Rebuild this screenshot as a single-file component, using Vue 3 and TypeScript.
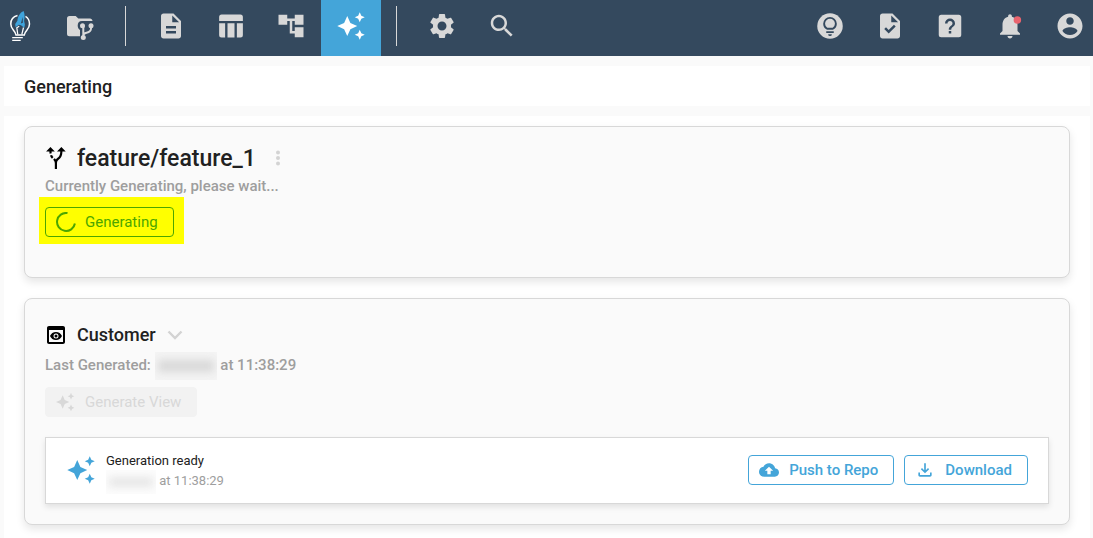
<script setup lang="ts">
interface NavItem {
  label: string
  path: string
  active?: boolean
}

const sparkle =
  'M19 9l1.25-2.75L23 5l-2.75-1.25L19 1l-1.25 2.75L15 5l2.75 1.25L19 9zm-7.5.5L9 4 6.5 9.5 1 12l5.5 2.5L9 20l2.5-5.5L17 12l-5.5-2.5zM19 15l-1.25 2.75L15 19l2.75 1.25L19 23l1.25-2.75L23 19l-2.75-1.25L19 15z'

const mainNav: NavItem[] = [
  {
    label: 'Documents',
    path: 'M14 2H6c-1.1 0-1.99.9-1.99 2L4 20c0 1.1.89 2 1.99 2H18c1.1 0 2-.9 2-2V8l-6-6zm2 16H8v-2h8v2zm0-4H8v-2h8v2zm-3-5V3.500L18.500 9H13z',
  },
  {
    label: 'Tables',
    path: 'M4.500 2.800h15a2 2 0 0 1 2 2V8h-19V4.800a2 2 0 0 1 2-2zM2.500 9.800h4.800v11.400H4.500a2 2 0 0 1-2-2zM9.200 9.800h5.600v11.400H9.200zM16.700 9.800h4.800v9.400a2 2 0 0 1-2 2h-2.800z',
  },
  { label: 'Structure', path: 'M22 11V3h-7v3H9V3H2v8h7V8h2v10h4v3h7v-8h-7v3h-2V8h2v3z' },
  { label: 'Generate', path: sparkle, active: true },
]

const toolNav: NavItem[] = [
  {
    label: 'Settings',
    path: 'M19.140 12.940c.04-.3.06-.61.06-.94 0-.32-.02-.64-.07-.94l2.030-1.580c.18-.14.23-.41.12-.61l-1.920-3.320c-.12-.22-.37-.29-.59-.22l-2.390.96c-.5-.38-1.030-.7-1.620-.94l-.36-2.540c-.04-.24-.24-.41-.48-.41h-3.840c-.24 0-.43.17-.47.41l-.36 2.540c-.59.24-1.130.57-1.620.94l-2.390-.96c-.22-.08-.47 0-.59.22L2.740 8.870c-.12.21-.08.47.12.61l2.030 1.580c-.05.3-.09.63-.09.94s.02.64.07.94l-2.030 1.580c-.18.14-.23.41-.12.61l1.920 3.320c.12.22.37.29.59.22l2.390-.96c.5.38 1.030.7 1.620.94l.36 2.540c.05.24.24.41.48.41h3.840c.24 0 .44-.17.47-.41l.36-2.540c.59-.24 1.130-.56 1.620-.94l2.390.96c.22.08.47 0 .59-.22l1.920-3.320c.12-.22.07-.47-.12-.61l-2.010-1.580zM12 15.600c-1.980 0-3.600-1.620-3.600-3.600s1.620-3.600 3.600-3.600 3.600 1.620 3.600 3.600-1.620 3.600-3.600 3.600z',
  },
  {
    label: 'Search',
    path: 'M15.500 14h-.79l-.28-.27C15.410 12.590 16 11.110 16 9.500 16 5.910 13.090 3 9.500 3S3 5.910 3 9.500 5.910 16 9.500 16c1.610 0 3.090-.59 4.230-1.570l.27.28v.79l5 4.990L20.490 19l-4.990-5zm-6 0C7.010 14 5 11.990 5 9.500S7.010 5 9.500 5 14 7.010 14 9.500 11.990 14 9.500 14z',
  },
]
</script>

<template>
  <div class="app">
    <header class="topbar">
      <nav class="left" aria-label="Main">
        <a class="logo" href="#" aria-label="Home">
          <svg viewBox="0 0 30 30" width="30" height="30" fill="none">
            <path d="M12.500 4.600C8.500 5.600 5.800 9 5.800 13c0 5.800 4.400 6.200 5.200 11h8.300c.8-4.800 5.200-5.200 5.200-11 0-3.600-1.500-6.200-4-7.700" stroke="#fff" stroke-width="1.500" />
            <path d="M12.800 23.500l-1-6.800 2.400-1.400M18.500 16.500l-1.700 7" stroke="#fff" stroke-width="1.200" />
            <path d="M7.200 26.600h10.600M7.200 29.300h8.500" stroke="#fff" stroke-width="1.300" />
            <path fill-rule="evenodd" d="M18.600 0c-3.600 1.600-5.900 5.600-6.200 9.700l-2.200 3.400.4 3.100 3.200-2.400 2.200.5 3.300 2.500.6-3.300-.8-3.500c.8-3.700.7-7-.5-10zM15.800 12.500l1.900-6.500.2 5.800z" fill="#3fa4dc" />
          </svg>
        </a>
        <button class="nav" type="button" aria-label="Repository">
          <svg viewBox="0 0 30 30" width="30" height="30">
            <path d="M4.500 5h6.200l2.600 2.500H25c1.300 0 2.400 1 2.500 2.500H17c-3 0-4.300 2-4.300 4.700 0 2 .9 3.300 2.300 4.200v6.300H4.500A2.500 2.500 0 0 1 2 22.700V7.500A2.500 2.500 0 0 1 4.500 5z" fill="currentColor" />
            <path d="M18.300 15v12M26 15v2.500c0 3-2 3.700-4.500 4.200-2 .4-3.200 1-3.200 3" fill="none" stroke="currentColor" stroke-width="2" />
            <circle cx="17.500" cy="14.800" r="2.500" fill="currentColor" />
            <circle cx="26" cy="14.800" r="2.500" fill="currentColor" />
            <circle cx="18.300" cy="26.500" r="2.500" fill="currentColor" />
          </svg>
        </button>
        <span class="divider"></span>
        <button v-for="item in mainNav" :key="item.label" class="nav" :class="{ active: item.active }" type="button" :aria-label="item.label">
          <svg viewBox="0 0 24 24" width="30" height="30"><path :d="item.path" fill="currentColor" /></svg>
        </button>
        <span class="divider"></span>
        <button v-for="item in toolNav" :key="item.label" class="nav" type="button" :aria-label="item.label">
          <svg viewBox="0 0 24 24" width="30" height="30"><path :d="item.path" fill="currentColor" /></svg>
        </button>
      </nav>
      <div class="right">
        <button type="button" aria-label="Tips">
          <svg viewBox="0 0 24 24" width="30" height="30">
            <circle cx="12" cy="12" r="10.200" fill="currentColor" />
            <path d="M9.700 14.200C8.200 13.400 7.300 12 7.300 10.200a4.700 4.700 0 0 1 9.400 0c0 1.800-.9 3.200-2.400 4z" fill="none" stroke="#34495e" stroke-width="1.500" stroke-linejoin="round" />
            <path d="M9 16.200h6v1.400H9zM10.500 18.500h3a1.500 1.500 0 0 1-3 0z" fill="#34495e" />
          </svg>
        </button>
        <button type="button" aria-label="Tasks">
          <svg viewBox="0 0 24 24" width="30" height="30">
            <path d="M14 2H6c-1.100 0-1.990.9-1.990 2L4 20c0 1.100.89 2 1.990 2H18c1.100 0 2-.9 2-2V8l-6-6zm-3.060 16L7.400 14.460l1.410-1.410 2.120 2.120 4.240-4.240 1.410 1.410L10.940 18zM13 9V3.500L18.500 9H13z" fill="currentColor" />
          </svg>
        </button>
        <button type="button" aria-label="Help">
          <svg viewBox="0 0 24 24" width="30" height="30">
            <path fill-rule="evenodd" d="M11 18h2v-2h-2zM12 6a4 4 0 0 0-4 4h2a2 2 0 0 1 4 0c0 2-3 1.750-3 5h2c0-2.250 3-2.500 3-5a4 4 0 0 0-4-4zM5 3h14a2 2 0 0 1 2 2v14a2 2 0 0 1-2 2H5a2 2 0 0 1-2-2V5a2 2 0 0 1 2-2z" fill="currentColor" />
          </svg>
        </button>
        <button type="button" aria-label="Notifications">
          <svg viewBox="0 0 24 24" width="30" height="30">
            <path d="M12 22c1.100 0 2-.9 2-2h-4c0 1.100.89 2 2 2zm6-6v-5c0-3.070-1.640-5.640-4.500-6.320V4c0-.83-.67-1.500-1.500-1.500s-1.500.67-1.500 1.500v.68C7.630 5.360 6 7.920 6 11v5l-2 2v1h16v-1l-2-2z" fill="currentColor" />
            <circle cx="17.900" cy="7.200" r="3" fill="#e9646e" />
          </svg>
        </button>
        <button type="button" aria-label="Account">
          <svg viewBox="0 0 24 24" width="30" height="30">
            <path d="M12 2C6.480 2 2 6.480 2 12s4.480 10 10 10 10-4.480 10-10S17.520 2 12 2zm0 3c1.660 0 3 1.340 3 3s-1.340 3-3 3-3-1.340-3-3 1.340-3 3-3zm0 14.200c-2.500 0-4.710-1.280-6-3.220.03-1.990 4-3.080 6-3.080 1.990 0 5.970 1.090 6 3.080-1.290 1.940-3.500 3.220-6 3.220z" fill="currentColor" />
          </svg>
        </button>
      </div>
    </header>

    <div class="page-title"><h1>Generating</h1></div>

    <main class="panel">
      <section class="card branch">
        <div class="heading">
          <svg viewBox="2 1 22 22" width="24" height="24">
            <path d="M9.780 11.160l-1.420 1.420c-.68-.69-1.340-1.580-1.790-2.940l1.940-.49c.32.890.77 1.500 1.270 2.010zM11 6L7 2 3 6h3.020c.02.810.08 1.540.19 2.170l1.940-.49C8.080 7.200 8.030 6.630 8.020 6H11zm10 0l-4-4-4 4h2.990c-.1 3.680-1.280 4.750-2.540 5.880-.5.440-1.010.920-1.450 1.550-.34-.49-.73-.88-1.130-1.240L9.460 13.600C10.390 14.450 11 15.140 11 17v5h2v-5c0-2.020.71-2.660 1.790-3.630 1.380-1.240 3.080-2.780 3.200-7.370H21z" />
          </svg>
          <h2 class="branch-name">feature/feature_1</h2>
          <button type="button" aria-label="More options">
            <svg viewBox="0 0 20 20" width="20" height="20" fill="#d3d3d3">
              <circle cx="10" cy="4.500" r="2" /><circle cx="10" cy="10" r="2" /><circle cx="10" cy="15.500" r="2" />
            </svg>
          </button>
        </div>
        <p class="sub">Currently Generating, please wait...</p>
        <div class="highlight">
          <button class="btn busy" type="button">
            <svg viewBox="0 0 20 20" width="20" height="20">
              <path d="M11.500 1.100A9 9 0 1 0 18.900 11.500" fill="none" stroke="currentColor" stroke-width="2" />
            </svg>
            Generating
          </button>
        </div>
      </section>

      <section class="card view">
        <div class="heading">
          <svg viewBox="1 0 24 24" width="24" height="24">
            <path fill-rule="evenodd" d="M19 3H5c-1.110 0-2 .9-2 2v14c0 1.100.89 2 2 2h14c1.100 0 2-.9 2-2V5c0-1.100-.89-2-2-2zm0 16H5V7h14v12zM12 9c-2.730 0-5.060 1.660-6 4 .94 2.340 3.270 4 6 4s5.060-1.660 6-4c-.94-2.340-3.270-4-6-4zm0 6.500a2.500 2.500 0 1 1 0-5 2.500 2.500 0 0 1 0 5z" />
            <circle cx="12" cy="13" r="1.500" />
          </svg>
          <h2 class="view-name">Customer</h2>
          <button type="button" aria-label="Expand">
            <svg viewBox="0 0 20 20" width="20" height="20">
              <path d="M4.500 6.500L11 13l6.500-6.500" fill="none" stroke="#d3d3d3" stroke-width="2.400" />
            </svg>
          </button>
        </div>
        <p class="sub">Last Generated: <span class="redacted"></span> at 11:38:29</p>
        <button class="btn disabled" type="button" disabled>
          <svg viewBox="1 0 24 24" width="20" height="20"><path :d="sparkle" fill="currentColor" /></svg>
          Generate View
        </button>

        <div class="result">
          <svg class="result-icon" viewBox="0 0 24 24" width="30" height="30"><path :d="sparkle" fill="currentColor" /></svg>
          <div class="result-text">
            <p>Generation ready</p>
            <p class="when"><span class="redacted small"></span> at 11:38:29</p>
          </div>
          <button class="btn primary" type="button">
            <svg viewBox="0 0 24 24" width="20" height="20">
              <path d="M19.350 10.040C18.670 6.590 15.640 4 12 4 9.110 4 6.600 5.640 5.350 8.040 2.340 8.360 0 10.910 0 14c0 3.310 2.690 6 6 6h13c2.760 0 5-2.240 5-5 0-2.640-2.050-4.780-4.650-4.960zM14 13v4h-4v-4H7l5-5 5 5h-3z" fill="currentColor" />
            </svg>
            Push to Repo
          </button>
          <button class="btn primary" type="button">
            <svg viewBox="0 0 24 24" width="20" height="20">
              <path d="M12 16l-5-5 1.400-1.450 2.600 2.600V4h2v8.150l2.600-2.600L17 11l-5 5zm-6 4c-1.100 0-2-.9-2-2v-3h2v3h12v-3h2v3c0 1.100-.9 2-2 2z" fill="currentColor" />
            </svg>
            Download
          </button>
        </div>
      </section>
    </main>
  </div>
</template>

<style>
body {
  margin: 0;
  background: #fafafa;
}
</style>

<style scoped>
.app {
  display: flex;
  flex-direction: column;
  min-height: 100vh;
  font-family: Roboto, "Liberation Sans", sans-serif;
  color: #212121;
}
h1, h2, p {
  margin: 0;
}
button {
  font: inherit;
  margin: 0;
  padding: 0;
  border: 0;
  background: none;
  cursor: pointer;
}
svg {
  display: block;
  flex: none;
}
.topbar {
  display: flex;
  justify-content: space-between;
  height: 56px;
  background: #34495e;
  color: #d8d8d8;
}
.topbar button {
  color: inherit;
}
.left, .right {
  display: flex;
}
.logo {
  width: 50px;
  box-sizing: border-box;
  padding: 11px 0 0 5px;
}
.nav {
  display: flex;
  justify-content: center;
  align-items: flex-start;
  width: 60px;
  height: 56px;
  padding-top: 11px;
}
.topbar .active {
  background: #44a5d9;
  color: #fff;
}
.divider {
  width: 1px;
  height: 40px;
  margin: 6px 15px 0;
  background: #d8d8d8;
}
.right {
  gap: 30px;
  align-items: flex-start;
  padding: 11px 8px 0 0;
}
.page-title, .panel {
  margin: 10px 3px 0 4px;
  background: #fff;
}
.page-title {
  padding: 9px 20px 7px;
}
.page-title h1 {
  font-size: 18px;
  line-height: 24px;
  font-weight: 500;
}
.panel {
  flex: 1;
  display: flex;
  flex-direction: column;
  gap: 20px;
  padding: 10px 20px;
}
.card {
  border: 1px solid #d8d8d8;
  border-radius: 8px;
  background: #fafafa;
  box-shadow: 0 4px 8px rgba(0, 0, 0, 0.1);
}
.branch {
  padding: 17px 20px 33px;
}
.view {
  padding: 22px 20px 20px;
}
.heading {
  display: flex;
  align-items: center;
  gap: 8px;
  height: 28px;
}
.heading h2 {
  font-weight: 500;
}
.heading > svg {
  fill: #000;
}
.branch-name {
  font-size: 23px;
  line-height: 28px;
  padding: 2px 4px 0 0;
}
.view-name {
  font-size: 18px;
  line-height: 28px;
}
.sub {
  margin-top: 4px;
  font-size: 15px;
  line-height: 20px;
  font-weight: 500;
  color: #9e9e9e;
}
.view .sub {
  margin: 6px 0 12px;
}
.highlight {
  width: fit-content;
  margin: 1px 0 0 -6px;
  padding: 10px 10px 7px 6px;
  background: #ff0;
}
.btn {
  display: flex;
  align-items: center;
  gap: 9px;
  height: 30px;
  padding: 0 15px 0 10px;
  border: 1px solid currentColor;
  border-radius: 4px;
  font-size: 15px;
  line-height: 20px;
  white-space: nowrap;
}
.busy {
  color: #4ca600;
}
.disabled {
  color: #d8d8d8;
  background: #f2f2f2;
  border-color: #f2f2f2;
  cursor: default;
}
.primary {
  gap: 10px;
  color: #44a5d9;
  font-weight: 500;
  background: #fff;
}
.result {
  display: flex;
  align-items: center;
  gap: 10px;
  margin-top: 20px;
  padding: 11px 20px 12px;
  border: 1px solid #d8d8d8;
  background: #fff;
  box-shadow: 0 3px 6px rgba(0, 0, 0, 0.1);
}
.result-icon {
  color: #44a5d9;
}
.result-text {
  flex: 1;
  padding-top: 2px;
  font-size: 13px;
  line-height: 20px;
}
.when {
  color: #9e9e9e;
}
.redacted {
  display: inline-block;
  width: 62px;
  height: 28px;
  margin: -8px 0;
  vertical-align: middle;
  background: #f4f4f4;
  overflow: hidden;
}
.redacted::before {
  content: "";
  display: block;
  height: 12px;
  margin: 8px 3px;
  background: #d8d8d8;
  filter: blur(4px);
}
.small {
  width: 50px;
  height: 24px;
  background: #fcfcfc;
}
.small::before {
  height: 8px;
  background: #e2e2e2;
}
</style>
